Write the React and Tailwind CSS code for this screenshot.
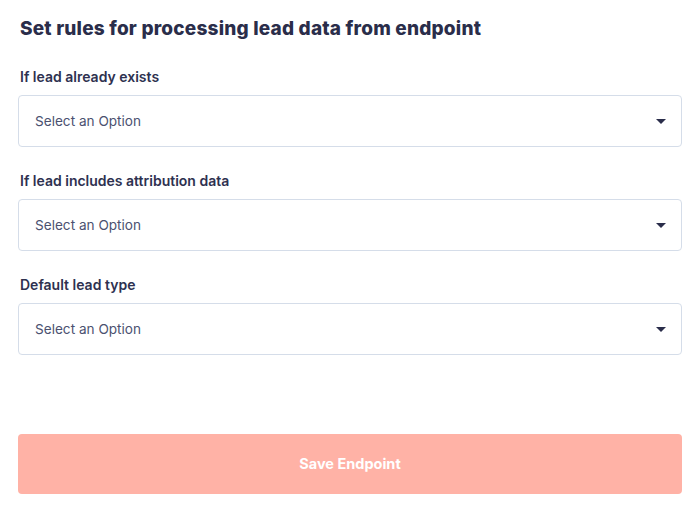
import React from "react";

function Field({ label }) {
  return (
    <div className="flex flex-col gap-2">
      <div className="pl-[2px] text-[14px] leading-5 font-semibold text-[#2e3150]">{label}</div>
      <div className="flex h-[52px] items-center justify-between rounded-[4px] border border-[#d5dde9] bg-white pl-4 pr-[15px]">
        <span className="text-[13.6px] text-[#4b5170]">Select an Option</span>
        <svg width="10" height="5" viewBox="0 0 10 5">
          <path d="M0 0 H10 L5 5 Z" fill="#2a2d4a" />
        </svg>
      </div>
    </div>
  );
}

export default function App() {
  return (
    <div className="min-h-[518px] w-[700px] bg-white px-[18px] pt-[17px]" style={{ fontFamily: "Inter, 'Noto Sans', sans-serif" }}>
      <h1 className="pl-[2px] text-[19px] leading-6 font-extrabold tracking-[0.2px] text-[#2a2d4a]">Set rules for processing lead data from endpoint</h1>
      <div className="mt-[26px] flex flex-col gap-6">
        <Field label="If lead already exists" />
        <Field label="If lead includes attribution data" />
        <Field label="Default lead type" />
      </div>
      <button className="mt-[79px] flex h-[60px] w-full items-center justify-center rounded-[4px] bg-[#ffb2a6] text-[14.5px] font-bold text-white">
        Save Endpoint
      </button>
    </div>
  );
}
